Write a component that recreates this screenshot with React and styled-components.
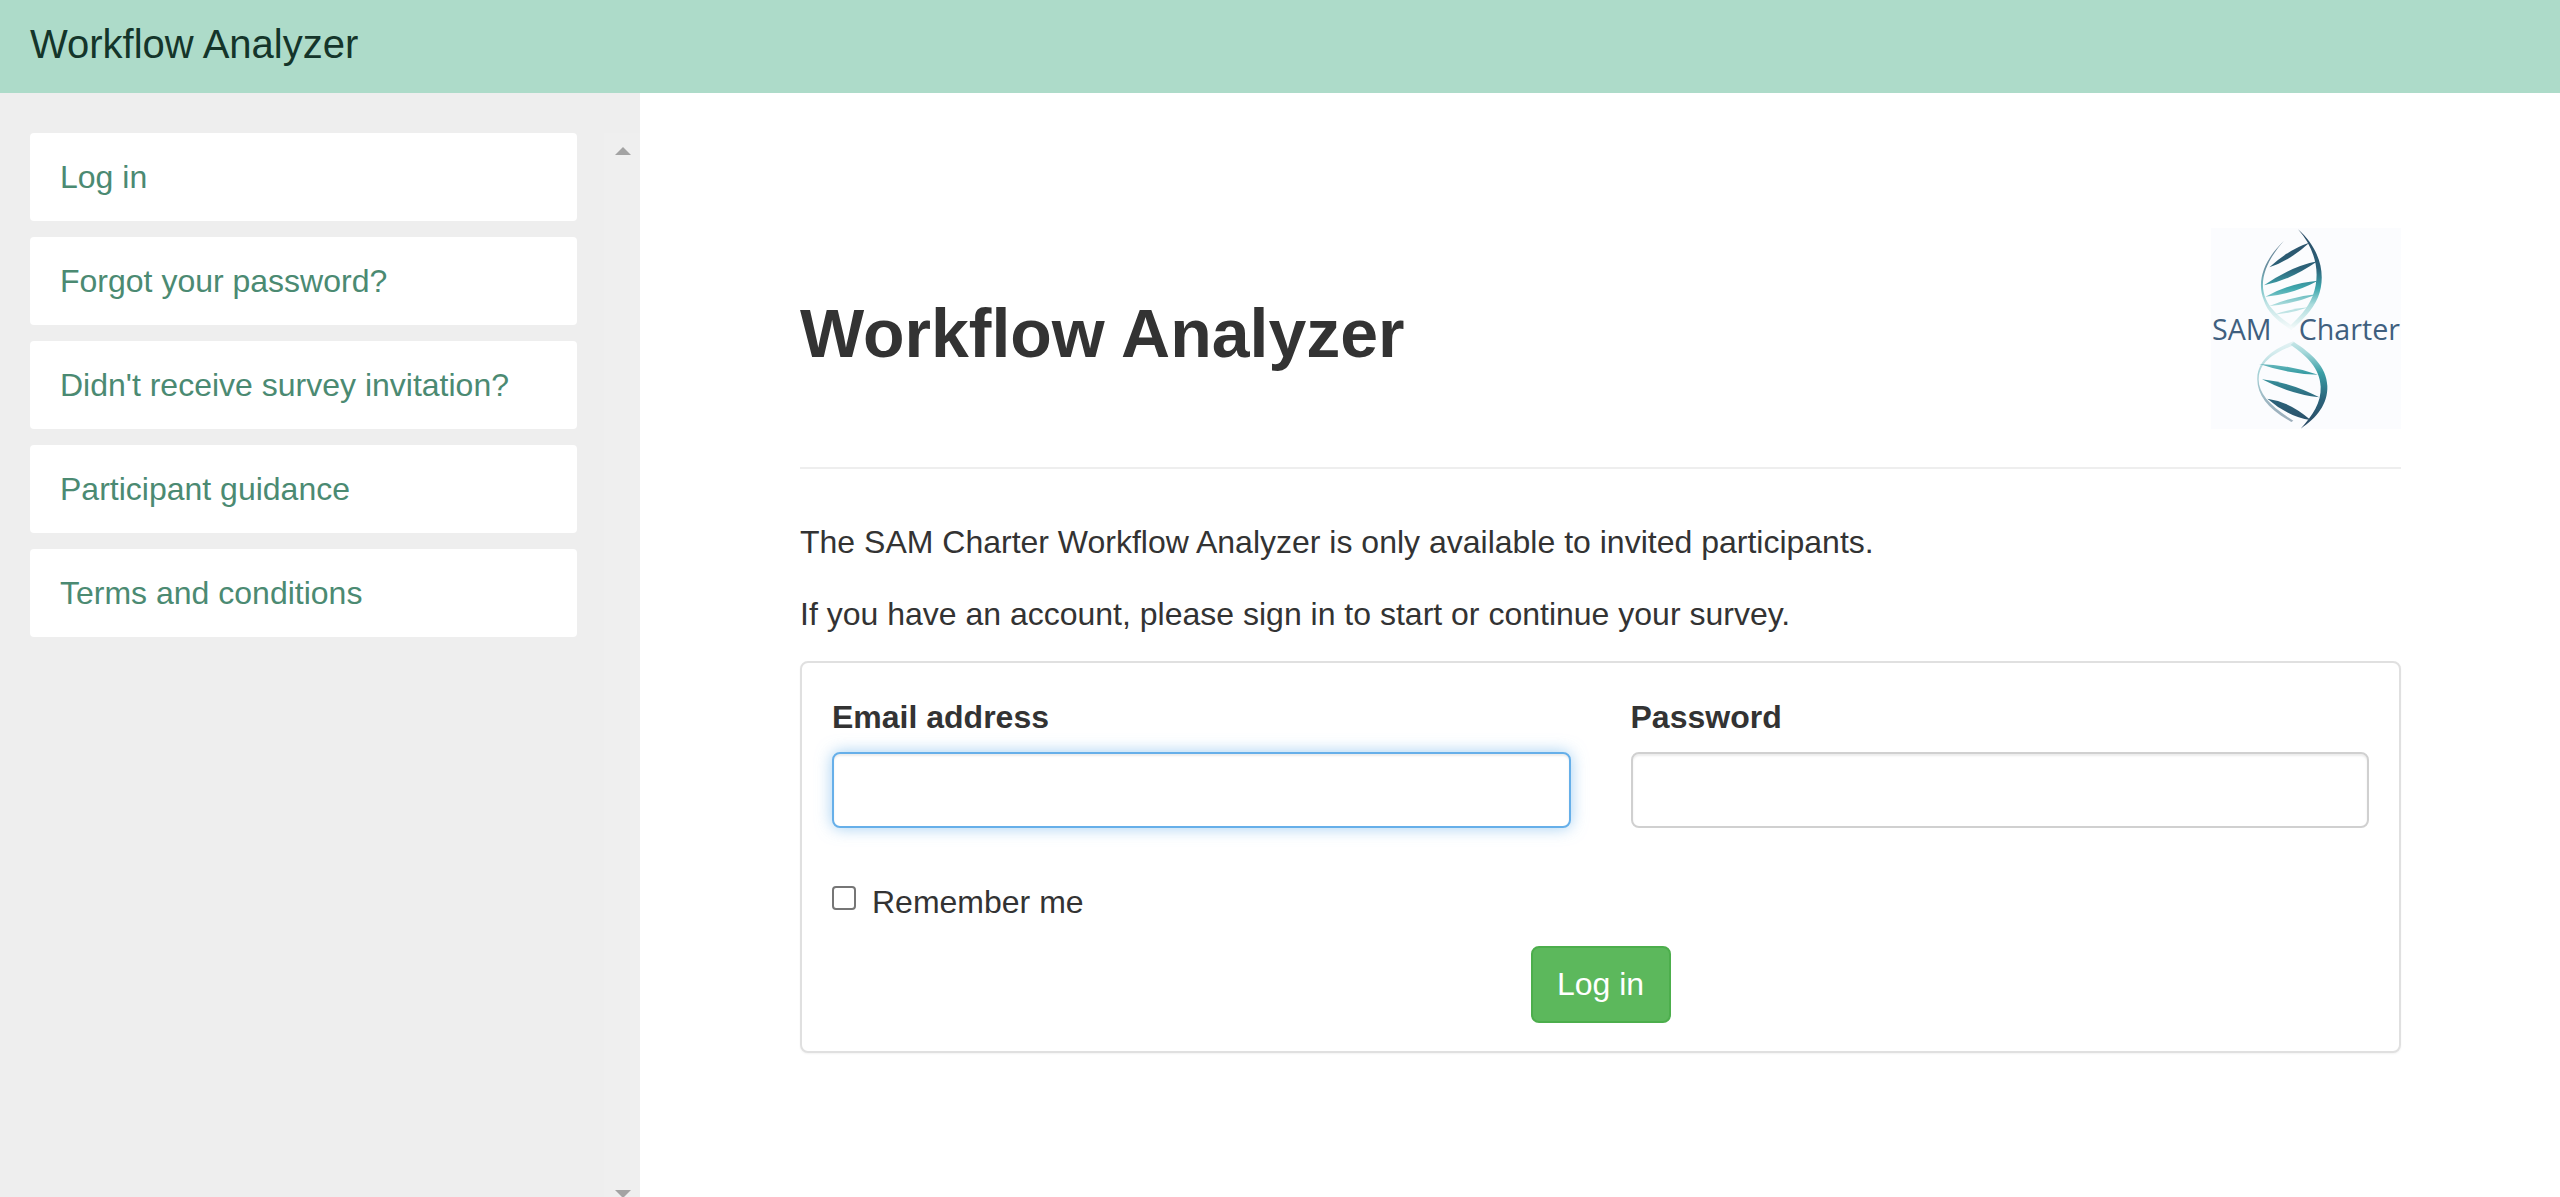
import React from 'react';
import styled, { createGlobalStyle } from 'styled-components';

const GlobalStyle = createGlobalStyle`
  html, body {
    margin: 0;
    padding: 0;
    height: 100%;
    overflow: hidden;
    background: #fff;
  }
  * {
    box-sizing: border-box;
  }
`;

const Page = styled.div`
  width: 2560px;
  height: 1197px;
  overflow: hidden;
  display: flex;
  flex-direction: column;
  font-family: "Liberation Sans", Arial, sans-serif;
  font-size: 32px;
  color: #333;
`;

const TopBar = styled.header`
  height: 93px;
  flex: none;
  display: flex;
  align-items: center;
  padding: 0 30px 4px;
  background: #addbc9;
  color: #14352a;
  font-size: 40px;
`;

const Body = styled.div`
  flex: 1;
  display: flex;
  min-height: 0;
`;

const Sidebar = styled.aside`
  width: 640px;
  flex: none;
  display: flex;
  background: #eee;
`;

const Nav = styled.nav`
  flex: 1;
  display: flex;
  flex-direction: column;
  gap: 16px;
  padding: 40px 27px 0 30px;
`;

const NavItem = styled.a`
  height: 88px;
  display: flex;
  align-items: center;
  padding: 0 30px;
  background: #fff;
  border-radius: 4px;
  color: #4b8a72;
  font-size: 32px;
`;

const ScrollTrack = styled.div`
  width: 36px;
  flex: none;
  height: 1065px;
  margin-top: 40px;
  padding: 14px 0 0 2px;
  display: flex;
  flex-direction: column;
  justify-content: space-between;
  align-items: center;
  background: #efefef;
`;

const ScrollArrow = styled.span`
  width: 0;
  height: 0;
  border-left: 8px solid transparent;
  border-right: 8px solid transparent;
  border-${(p) => (p.$down ? 'top' : 'bottom')}: 8px solid #a3a3a3;
`;

const Main = styled.main`
  flex: 1;
  padding: 132px 159px 0 160px;
`;

const PageHeader = styled.div`
  display: flex;
  justify-content: space-between;
  align-items: flex-start;
  height: 244px;
  border-bottom: 2px solid #eee;
`;

const Title = styled.h1`
  margin: 71px 0 0;
  font-size: 68px;
  line-height: 75px;
  font-weight: 700;
  color: #333;
`;

const LogoBox = styled.svg`
  display: block;
  width: 190px;
  height: 201px;
  margin-top: 3px;
`;

const Intro = styled.p`
  margin: 0;
  font-size: 32px;
  line-height: 46px;
  padding-top: ${(p) => p.$top || 0}px;
`;

const LoginPanel = styled.form`
  margin-top: 24px;
  height: 392px;
  padding: 31px 30px 30px;
  background: #fff;
  border: 2px solid #e0e0e0;
  border-radius: 8px;
  box-shadow: 0 1px 2px rgba(0, 0, 0, 0.05);
`;

const FieldRow = styled.div`
  display: grid;
  grid-template-columns: 1fr 1fr;
  gap: 60px;
`;

const Field = styled.div`
  display: flex;
  flex-direction: column;
`;

const FieldLabel = styled.label`
  font-weight: 700;
  font-size: 32px;
  line-height: 46px;
  margin-bottom: 12px;
`;

const TextInput = styled.input`
  height: 76px;
  width: 100%;
  padding: 12px 24px;
  font: inherit;
  border-radius: 8px;
  outline: none;
  background: #fff;
  border: 2px solid ${(p) => (p.$focused ? '#66afe9' : '#d0d0d0')};
  box-shadow: inset 0 2px 2px rgba(0, 0, 0, 0.075)
    ${(p) => (p.$focused ? ', 0 0 16px rgba(102, 175, 233, 0.6)' : '')};
`;

const RememberRow = styled.label`
  display: flex;
  align-items: flex-start;
  margin-top: 51px;
  line-height: 46px;
`;

const CheckBox = styled.input`
  appearance: none;
  width: 24px;
  height: 24px;
  margin: 7px 16px 0 0;
  background: #fff;
  border: 2px solid #767676;
  border-radius: 4px;
`;

const ButtonRow = styled.div`
  display: flex;
  justify-content: center;
  margin-top: 21px;
`;

const SubmitButton = styled.button`
  width: 140px;
  height: 77px;
  font: inherit;
  color: #fff;
  background: #5cb85c;
  border: 2px solid #4cae4c;
  border-radius: 8px;
`;

const links = [
  'Log in',
  'Forgot your password?',
  "Didn't receive survey invitation?",
  'Participant guidance',
  'Terms and conditions',
];

// rungs of the helix, as [x1, y1, x2, y2, thickness]
const rungs = [
  [268, 172, 388, 98, 18],
  [252, 226, 412, 154, 20],
  [256, 260, 414, 212, 18],
  [268, 288, 414, 252, 12],
  [282, 314, 386, 292, 7],
  [238, 462, 414, 494, 14],
  [246, 508, 418, 562, 18],
  [262, 566, 392, 630, 24],
];

const rungPath = ([x1, y1, x2, y2, t]) => {
  const mx = (x1 + x2) / 2;
  const my = (y1 + y2) / 2;
  return `M${x1} ${y1}Q${mx} ${my - t} ${x2} ${y2}Q${mx} ${my + t} ${x1} ${y1}Z`;
};

function Logo() {
  return (
    <LogoBox viewBox="93 54 570 603">
      <defs>
        <linearGradient id="helix" gradientUnits="userSpaceOnUse" x1="0" y1="55" x2="0" y2="655">
          <stop offset="0" stopColor="#2c4a64" />
          <stop offset="0.2" stopColor="#2b6279" />
          <stop offset="0.3" stopColor="#3fa8ae" />
          <stop offset="0.38" stopColor="#a8dadb" />
          <stop offset="0.5" stopColor="#f2f9f9" />
          <stop offset="0.62" stopColor="#a5d8da" />
          <stop offset="0.72" stopColor="#3b9fa6" />
          <stop offset="0.86" stopColor="#2b6279" />
          <stop offset="1" stopColor="#2c4a64" />
        </linearGradient>
      </defs>
      <rect x="93" y="54" width="570" height="603" fill="#fbfcfe" />
      <g fill="url(#helix)">
        <path d="M354 58C416 112 442 190 414 262C396 304 368 328 342 354L332 346C356 322 382 298 398 258C424 190 406 116 354 58Z" />
        <path opacity="0.7" d="M312 92C264 146 232 210 258 268C272 300 304 326 342 352L334 360C294 334 262 306 252 272C226 208 258 144 312 92Z" />
        <path d="M342 396C394 430 440 470 442 528C444 582 410 624 362 656C398 616 424 578 422 530C420 474 380 438 332 404Z" />
        <path opacity="0.45" d="M346 404C292 424 238 452 236 506C234 550 272 590 340 632L334 636C264 596 230 554 232 504C234 446 286 414 340 394Z" />
        {rungs.map((r) => (
          <path key={r.join('-')} d={rungPath(r)} />
        ))}
      </g>
      <text x="96" y="391" fontFamily='"Open Sans", sans-serif' fontSize="86" fill="#3f5f7f">SAM</text>
      <text x="356" y="391" fontFamily='"Open Sans", sans-serif' fontSize="86" fill="#3f5f7f">Charter</text>
    </LogoBox>
  );
}

export default function App() {
  return (
    <Page>
      <GlobalStyle />
      <TopBar>Workflow Analyzer</TopBar>
      <Body>
        <Sidebar>
          <Nav>
            {links.map((link) => (
              <NavItem key={link}>{link}</NavItem>
            ))}
          </Nav>
          <ScrollTrack>
            <ScrollArrow />
            <ScrollArrow $down />
          </ScrollTrack>
        </Sidebar>
        <Main>
          <PageHeader>
            <Title>Workflow Analyzer</Title>
            <Logo />
          </PageHeader>
          <Intro $top={50}>The SAM Charter Workflow Analyzer is only available to invited participants.</Intro>
          <Intro $top={26}>If you have an account, please sign in to start or continue your survey.</Intro>
          <LoginPanel onSubmit={(e) => e.preventDefault()}>
            <FieldRow>
              <Field>
                <FieldLabel>Email address</FieldLabel>
                <TextInput type="email" $focused />
              </Field>
              <Field>
                <FieldLabel>Password</FieldLabel>
                <TextInput type="password" />
              </Field>
            </FieldRow>
            <RememberRow>
              <CheckBox type="checkbox" />
              Remember me
            </RememberRow>
            <ButtonRow>
              <SubmitButton>Log in</SubmitButton>
            </ButtonRow>
          </LoginPanel>
        </Main>
      </Body>
    </Page>
  );
}
